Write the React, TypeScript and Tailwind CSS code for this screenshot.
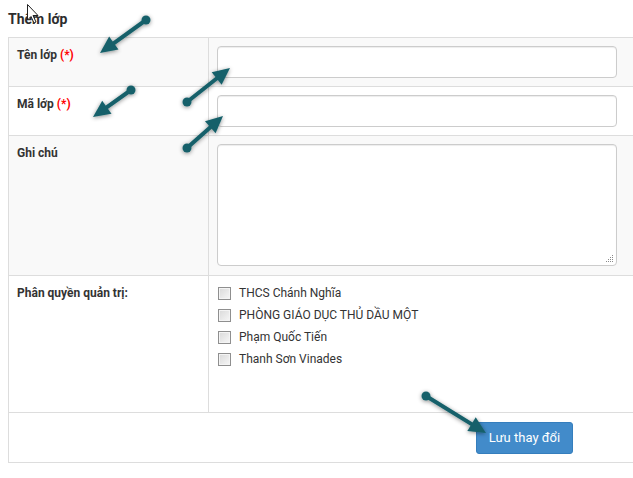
import type { ReactNode } from "react";

const arrows = [
  { from: [146, 20], to: [100, 53] },
  { from: [131, 90], to: [93, 117] },
  { from: [187, 102], to: [230, 68] },
  { from: [187, 148], to: [223, 116] },
  { from: [426, 396], to: [486, 433] },
];

const units = [
  "THCS Chánh Nghĩa",
  "PHÒNG GIÁO DỤC THỦ DẦU MỘT",
  "Phạm Quốc Tiến",
  "Thanh Sơn Vinades",
];

const Required = () => <span className="text-[#ff0000]"> (*)</span>;

const Row = ({ label, children, className }: { label: ReactNode; children: ReactNode; className: string }) => (
  <div className={`grid grid-cols-[200px_1fr] border-b border-[#ddd] ${className}`}>
    <div className="border-r border-[#ddd] px-2 py-2 text-[12px] font-bold leading-[18px]">{label}</div>
    <div className="p-2">{children}</div>
  </div>
);

const Annotations = () => (
  <svg className="pointer-events-none absolute left-0 top-0" width="633" height="478">
    <defs>
      <filter id="shadow" x="-30%" y="-30%" width="160%" height="160%">
        <feDropShadow dx="0" dy="1" stdDeviation="2" floodColor="#000" floodOpacity="0.45" />
      </filter>
    </defs>
    {arrows.map((a, i) => {
      const [x1, y1] = a.from;
      const [x2, y2] = a.to;
      const dx = x2 - x1;
      const dy = y2 - y1;
      const len = Math.hypot(dx, dy);
      const ux = dx / len;
      const uy = dy / len;
      const head = 17;
      const half = 8;
      const bx = x2 - ux * head;
      const by = y2 - uy * head;
      const pts = `${x2},${y2} ${bx - uy * half},${by + ux * half} ${bx + uy * half},${by - ux * half}`;
      return (
        <g key={i} filter="url(#shadow)" fill="#17616a" stroke="#17616a">
          <line x1={x1} y1={y1} x2={bx + ux * 2} y2={by + uy * 2} strokeWidth="4" strokeLinecap="round" />
          <circle cx={x1} cy={y1} r="4.5" stroke="none" />
          <polygon points={pts} stroke="none" />
        </g>
      );
    })}
    {/* mouse pointer */}
    <path
      d="M27.5 4.5 L27.5 20 L31 16.5 L34 23 L36 22 L33 15.5 L38 15.5 Z"
      fill="#fff"
      stroke="#222"
      strokeWidth="1"
      strokeLinejoin="round"
    />
  </svg>
);

const Grip = () => (
  <svg className="pointer-events-none absolute bottom-[3px] right-[3px]" width="8" height="8">
    {[
      [6, 0],
      [4, 2],
      [6, 2],
      [2, 4],
      [4, 4],
      [6, 4],
      [0, 6],
      [2, 6],
      [4, 6],
      [6, 6],
    ].map(([x, y]) => (
      <rect key={`${x}-${y}`} x={x} y={y} width="1" height="1" fill="#8a8a8a" />
    ))}
  </svg>
);

export default function App() {
  return (
    <div className="relative h-[478px] w-[633px] overflow-hidden bg-white font-['Roboto','Liberation_Sans',sans-serif] text-[#333]">
      <h3 className="h-[37px] pl-2 pt-[9px] text-[14px] font-bold leading-[20px] text-[#2d2d2d]">Thêm lớp</h3>

      <div className="ml-2 w-[1033px] border border-[#ddd]">
        <Row className="h-[49px] bg-[#f9f9f9]" label={<>Tên lớp<Required /></>}>
          <input className="h-8 w-[400px] rounded-[4px] border border-[#ccc] bg-white shadow-[inset_0_1px_1px_rgba(0,0,0,0.075)] outline-none" />
        </Row>
        <Row className="h-[49px] bg-white" label={<>Mã lớp<Required /></>}>
          <input className="h-8 w-[400px] rounded-[4px] border border-[#ccc] bg-white shadow-[inset_0_1px_1px_rgba(0,0,0,0.075)] outline-none" />
        </Row>
        <Row className="h-[140px] bg-[#f9f9f9]" label="Ghi chú">
          <div className="relative w-[400px]">
            <textarea className="block h-[122px] w-[400px] resize-none rounded-[4px] border border-[#ccc] bg-white shadow-[inset_0_1px_1px_rgba(0,0,0,0.075)] outline-none" />
            <Grip />
          </div>
        </Row>
        <Row className="h-[137px] bg-white" label="Phân quyền quản trị:">
          <ul className="-mt-[2px] flex flex-col">
            {units.map((u) => (
              <li key={u} className="flex h-[22px] items-center gap-[8px] pl-[1px] text-[12px]">
                <span className="h-[13px] w-[13px] border border-[#8f8f8f] bg-gradient-to-br from-[#d9d9d9] to-[#f7f7f7] shadow-[inset_0_0_0_1px_#f4f4f4]" />
                {u}
              </li>
            ))}
          </ul>
        </Row>
        <div className="flex h-[49px] items-center justify-center">
          <button className="h-8 rounded-[3px] border border-[#357ebd] bg-[#428bca] px-3 text-[13px] text-white">
            Lưu thay đổi
          </button>
        </div>
      </div>

      <Annotations />
    </div>
  );
}
